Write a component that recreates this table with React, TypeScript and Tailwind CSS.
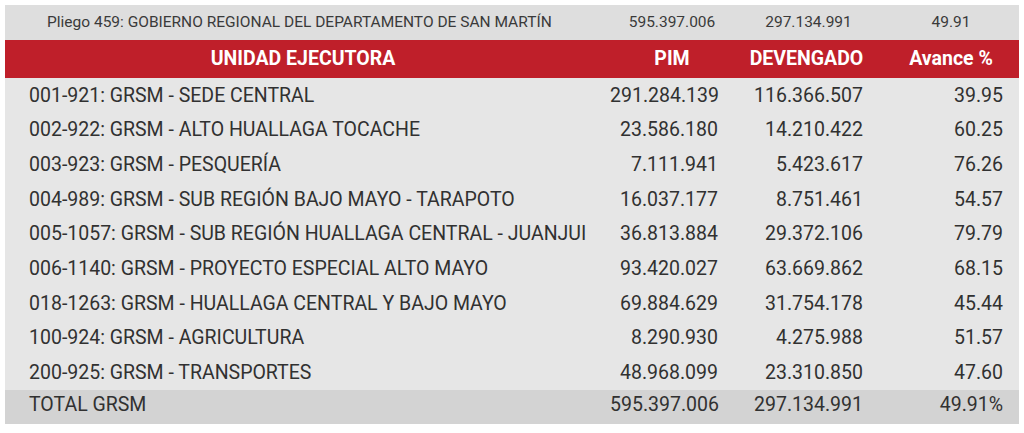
import React from "react";

const rows: [string, string, string, string][] = [
  ["001-921: GRSM - SEDE CENTRAL", "291.284.139", "116.366.507", "39.95"],
  ["002-922: GRSM - ALTO HUALLAGA TOCACHE", "23.586.180", "14.210.422", "60.25"],
  ["003-923: GRSM - PESQUERÍA", "7.111.941", "5.423.617", "76.26"],
  ["004-989: GRSM - SUB REGIÓN BAJO MAYO - TARAPOTO", "16.037.177", "8.751.461", "54.57"],
  ["005-1057: GRSM - SUB REGIÓN HUALLAGA CENTRAL - JUANJUI", "36.813.884", "29.372.106", "79.79"],
  ["006-1140: GRSM - PROYECTO ESPECIAL ALTO MAYO", "93.420.027", "63.669.862", "68.15"],
  ["018-1263: GRSM - HUALLAGA CENTRAL Y BAJO MAYO", "69.884.629", "31.754.178", "45.44"],
  ["100-924: GRSM - AGRICULTURA", "8.290.930", "4.275.988", "51.57"],
  ["200-925: GRSM - TRANSPORTES", "48.968.099", "23.310.850", "47.60"],
];

const cols = "grid grid-cols-[605px_124px_145px_140px]";

export default function App() {
  return (
    <div
      className="w-[1024px] h-[433px] bg-white pt-[5px] pl-[5px]"
      style={{ fontFamily: "Roboto, 'Liberation Sans', sans-serif" }}
    >
      <div className="w-[1014px]">
        <div className={`${cols} h-[35px] items-center bg-[#dedede] text-[#3a3a3a] text-[15.5px]`}>
          <div className="pl-[42px] whitespace-nowrap">Pliego 459: GOBIERNO REGIONAL DEL DEPARTAMENTO DE SAN MARTÍN</div>
          <div className="text-center">595.397.006</div>
          <div className="text-center pl-[4px]">297.134.991</div>
          <div className="text-center pl-[4px]">49.91</div>
        </div>
        <div className={`${cols} h-[38px] items-center bg-[#bf1f2a] text-white font-bold text-[19.5px]`}>
          <div className="text-center pr-[9px]">UNIDAD EJECUTORA</div>
          <div className="text-center">PIM</div>
          <div className="text-center">DEVENGADO</div>
          <div className="text-center pl-[4px]">Avance %</div>
        </div>
        <div className="bg-[#e6e6e6] text-[#313131] text-[19.5px]">
          {rows.map((r) => (
            <div key={r[0]} className={`${cols} h-[34.67px] items-center`}>
              <div className="pl-[24px] whitespace-nowrap">{r[0]}</div>
              <div className="text-right pr-[16px]">{r[1]}</div>
              <div className="text-right pr-[16px]">{r[2]}</div>
              <div className="text-right pr-[16px]">{r[3]}</div>
            </div>
          ))}
        </div>
        <div className={`${cols} h-[34px] items-center pb-[4px] bg-[#d3d3d3] text-[#313131] text-[19.5px]`}>
          <div className="pl-[24px]">TOTAL GRSM</div>
          <div className="text-right pr-[16px]">595.397.006</div>
          <div className="text-right pr-[16px]">297.134.991</div>
          <div className="text-right pr-[16px]">49.91%</div>
        </div>
      </div>
    </div>
  );
}
